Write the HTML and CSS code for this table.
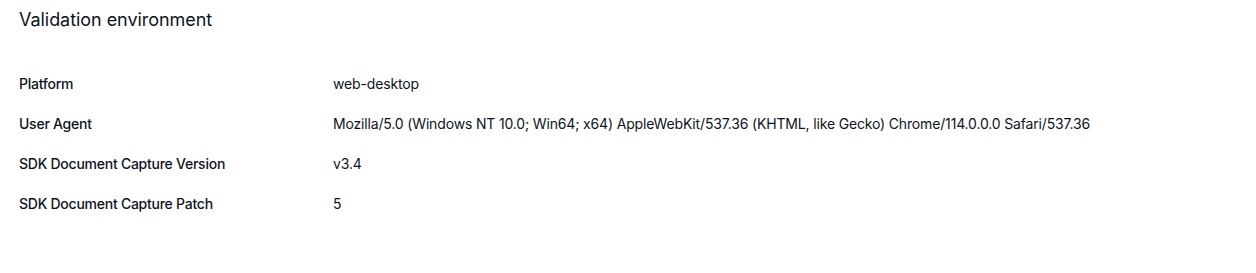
FILE: index.html
```html
<!DOCTYPE html>
<html>
<head>
  <meta charset="UTF-8">
  <meta name="viewport" content="width=device-width, initial-scale=1">
  <title>Validation environment</title>
  <link rel="stylesheet" href="styles.css">
</head>
<body>
  <section class="panel">
    <h2 class="panel-title">Validation environment</h2>
    <dl class="env">
      <div class="env-row">
        <dt>Platform</dt>
        <dd>web-desktop</dd>
      </div>
      <div class="env-row">
        <dt>User Agent</dt>
        <dd>Mozilla/5.0 (Windows NT 10.0; Win64; x64) AppleWebKit/537.36 (KHTML, like Gecko) Chrome/114.0.0.0 Safari/537.36</dd>
      </div>
      <div class="env-row">
        <dt>SDK Document Capture Version</dt>
        <dd>v3.4</dd>
      </div>
      <div class="env-row">
        <dt>SDK Document Capture Patch</dt>
        <dd>5</dd>
      </div>
    </dl>
  </section>
</body>
</html>
```

FILE: styles.css
```css
body {
  margin: 0;
  font-family: Inter, "Noto Sans", sans-serif;
  color: #0e1422;
  background: #ffffff;
}
.panel {
  padding: 8px 19px;
}
.panel-title {
  margin: 0;
  font-size: 18px;
  font-weight: 400;
  line-height: 24px;
  letter-spacing: -0.05px;
}
.env {
  margin: 42px 0 0;
}
.env-row {
  display: flex;
  height: 40px;
  align-items: flex-start;
}
.env dt {
  width: 314px;
  font-size: 14px;
  font-weight: 500;
  line-height: 20px;
  letter-spacing: -0.25px;
}
.env dd {
  margin: 0;
  font-size: 14px;
  line-height: 20px;
  letter-spacing: -0.16px;
}
```
